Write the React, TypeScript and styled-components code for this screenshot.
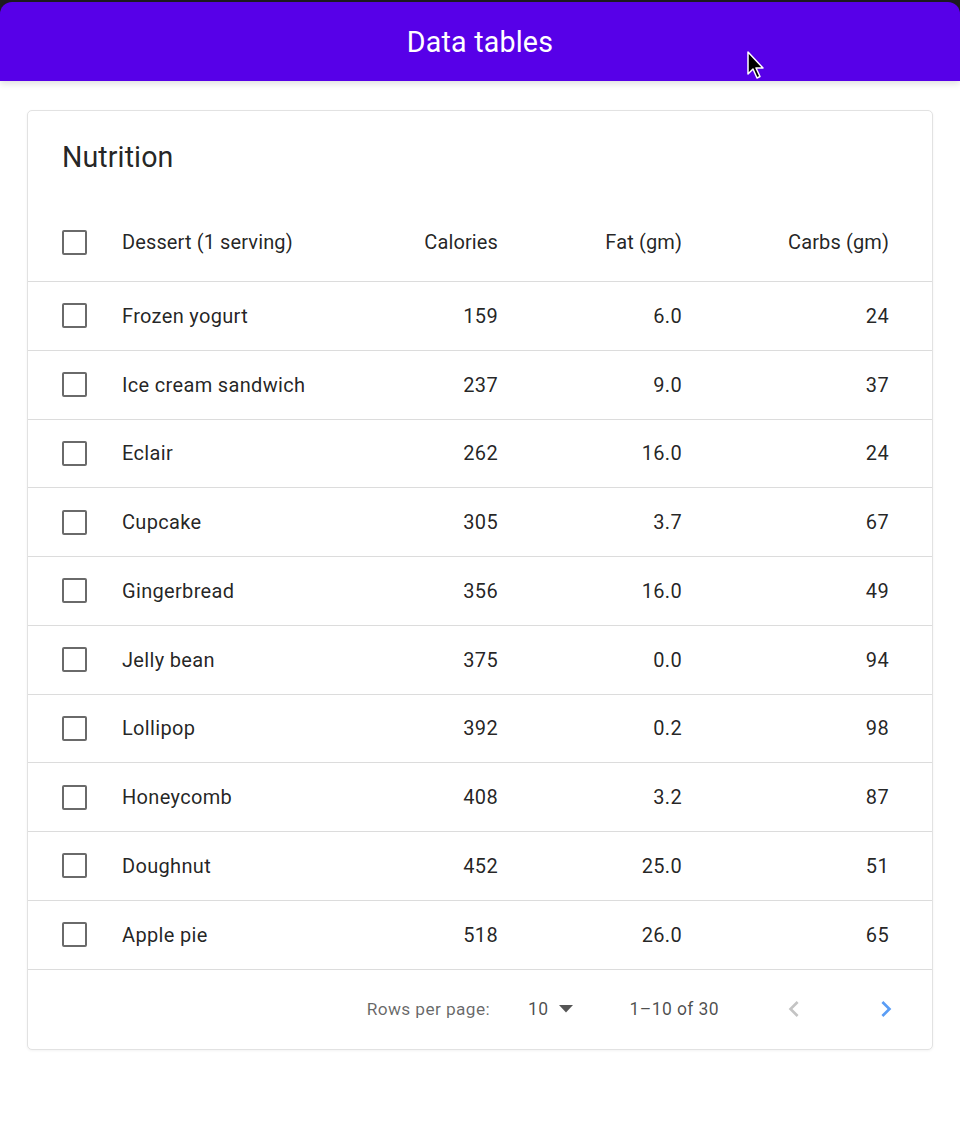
import React from "react";
import styled, { createGlobalStyle } from "styled-components";

const Global = createGlobalStyle`
  html, body { margin: 0; padding: 0; background: #ffffff; }
  body { font-family: Roboto, "Noto Sans", "Liberation Sans", sans-serif; -webkit-font-smoothing: antialiased; }
  * { box-sizing: border-box; }
`;

const Page = styled.div`
  position: relative;
  width: 960px;
  min-height: 1139px;
  background: #ffffff;
`;

const HeaderFrame = styled.div`
  background: #1d1b20;
  padding-top: 2px;
`;

const AppBar = styled.header`
  height: 79px;
  background: #5700e8;
  border-radius: 12px 12px 0 0;
  display: flex;
  align-items: center;
  justify-content: center;
  box-shadow: 0 3px 6px rgba(0, 0, 0, 0.12);
  position: relative;
  z-index: 1;
`;

const AppTitle = styled.h1`
  margin: 0;
  padding-top: 2px;
  color: #ffffff;
  font-size: 28.6px;
  font-weight: 400;
  letter-spacing: 0.2px;
  line-height: 1;
`;

const Content = styled.main`
  padding: 29px 27px 60px;
`;

const Card = styled.section`
  border: 1px solid #e2e2e2;
  border-radius: 5px;
  background: #ffffff;
  box-shadow: 0 1px 3px rgba(0, 0, 0, 0.05);
  overflow: hidden;
`;

const CardTitle = styled.h2`
  margin: 0;
  height: 92px;
  padding: 28px 0 0 34px;
  font-size: 28.6px;
  line-height: 36px;
  font-weight: 400;
  color: rgba(0, 0, 0, 0.87);
  letter-spacing: 0.1px;
`;

const Row = styled.div<{ $head?: boolean }>`
  display: grid;
  grid-template-columns: 60px 1fr 140px 184px 207px;
  align-items: center;
  height: ${(p) => (p.$head ? "79px" : "68.75px")};
  padding: 0 43px 0 34px;
  border-bottom: 1px solid #dcdcdc;
  font-size: 20px;
  letter-spacing: ${(p) => (p.$head ? "0.12px" : "0.33px")};
  color: rgba(0, 0, 0, 0.87);
  font-weight: 400;
`;

const Cell = styled.div<{ $num?: boolean }>`
  text-align: ${(p) => (p.$num ? "right" : "left")};
  white-space: nowrap;
`;

const Checkbox = styled.span`
  display: block;
  width: 25px;
  height: 25px;
  border: 2.8px solid #6a6a6a;
  border-radius: 2px;
`;

const Footer = styled.div`
  display: flex;
  align-items: center;
  justify-content: flex-end;
  height: 79px;
  padding-right: 15px;
  font-size: 17.3px;
  letter-spacing: 0.4px;
`;

const Label = styled.span`
  color: rgba(0, 0, 0, 0.6);
  margin-right: 38px;
`;

const Select = styled.span`
  display: flex;
  align-items: center;
  gap: 10px;
  color: rgba(0, 0, 0, 0.7);
  font-size: 17.5px;
`;

const Range = styled.span`
  margin-left: 57px;
  margin-right: 43px;
  color: rgba(0, 0, 0, 0.7);
  font-size: 17.5px;
`;

const IconButton = styled.span<{ $active?: boolean }>`
  width: 63px;
  height: 63px;
  display: flex;
  align-items: center;
  justify-content: center;
  color: ${(p) => (p.$active ? "#5a9df5" : "#c4c4c4")};
  & + & { margin-left: 29px; }
`;

const Cursor = styled.svg`
  position: absolute;
  left: 746px;
  top: 51px;
  z-index: 2;
`;

const data: [string, number, string, number][] = [
  ["Frozen yogurt", 159, "6.0", 24],
  ["Ice cream sandwich", 237, "9.0", 37],
  ["Eclair", 262, "16.0", 24],
  ["Cupcake", 305, "3.7", 67],
  ["Gingerbread", 356, "16.0", 49],
  ["Jelly bean", 375, "0.0", 94],
  ["Lollipop", 392, "0.2", 98],
  ["Honeycomb", 408, "3.2", 87],
  ["Doughnut", 452, "25.0", 51],
  ["Apple pie", 518, "26.0", 65],
];

export default function App() {
  return (
    <Page>
      <Global />
      <HeaderFrame>
        <AppBar>
          <AppTitle>Data tables</AppTitle>
        </AppBar>
      </HeaderFrame>
      <Cursor width="20" height="30" viewBox="0 0 20 30">
        <path d="M2 1 L2 23 L7 18 L11 27 L14 25.5 L10 17 L17 17 Z" fill="#000" stroke="#fff" strokeWidth="1.5" strokeLinejoin="round" />
      </Cursor>
      <Content>
        <Card>
          <CardTitle>Nutrition</CardTitle>
          <Row $head>
            <Checkbox />
            <Cell>Dessert (1 serving)</Cell>
            <Cell $num>Calories</Cell>
            <Cell $num>Fat (gm)</Cell>
            <Cell $num>Carbs (gm)</Cell>
          </Row>
          {data.map(([name, cal, fat, carbs]) => (
            <Row key={name}>
              <Checkbox />
              <Cell>{name}</Cell>
              <Cell $num>{cal}</Cell>
              <Cell $num>{fat}</Cell>
              <Cell $num>{carbs}</Cell>
            </Row>
          ))}
          <Footer>
            <Label>Rows per page:</Label>
            <Select>
              10
              <svg width="14" height="8" viewBox="0 0 14 8">
                <path d="M0 0 L14 0 L7 7.5 Z" fill="#555" />
              </svg>
            </Select>
            <Range>1–10 of 30</Range>
            <IconButton>
              <svg width="32" height="32" viewBox="0 0 24 24">
                <path d="M15.41 7.41L14 6l-6 6 6 6 1.41-1.41L10.83 12z" fill="currentColor" />
              </svg>
            </IconButton>
            <IconButton $active>
              <svg width="32" height="32" viewBox="0 0 24 24">
                <path d="M8.59 16.59L10 18l6-6-6-6-1.41 1.41L13.17 12z" fill="currentColor" />
              </svg>
            </IconButton>
          </Footer>
        </Card>
      </Content>
    </Page>
  );
}
